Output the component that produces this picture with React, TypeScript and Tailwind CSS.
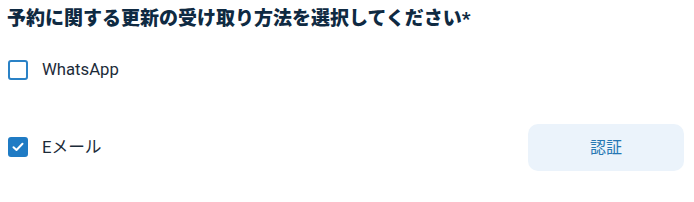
import React, { useState } from "react";

function Check({ checked, onClick }: { checked: boolean; onClick: () => void }) {
  return (
    <button
      onClick={onClick}
      className={
        "w-5 h-5 rounded-[3px] border-2 flex items-center justify-center shrink-0 " +
        (checked ? "bg-[#1f7bc4] border-[#1f7bc4]" : "bg-white border-[#2a82c6]")
      }
    >
      {checked && (
        <svg width="12" height="10" viewBox="0 0 12 10" fill="none">
          <path d="M1.5 5.2 L4.5 8 L10.5 1.8" stroke="white" strokeWidth="2" strokeLinecap="round" strokeLinejoin="round" />
        </svg>
      )}
    </button>
  );
}

export default function App() {
  const [wa, setWa] = useState(false);
  const [em, setEm] = useState(true);
  return (
    <div
      className="w-[694px] h-[202px] bg-white px-2 pt-[5px]"
      style={{ fontFamily: 'Roboto, "Noto Sans CJK JP", sans-serif' }}
    >
      <h1 className="text-[19px] leading-[28px] font-extrabold text-[#0f2a42] -ml-[1px]">
        予約に関する更新の受け取り方法を選択してください*
      </h1>
      <div className="mt-[27px] flex items-center h-5 gap-[14px]">
        <Check checked={wa} onClick={() => setWa(!wa)} />
        <span className="text-[16.7px] text-[#1c2b39]">WhatsApp</span>
      </div>
      <div className="mt-[44px] flex items-center justify-between pr-[2px]">
        <div className="flex items-center gap-[14px]">
          <Check checked={em} onClick={() => setEm(!em)} />
          <span className="text-[16.7px] text-[#1c2b39]">Eメール</span>
        </div>
        <button className="w-[156px] h-[47px] rounded-[10px] bg-[#ebf3fb] text-[#2677b3] text-[16px]">
          認証
        </button>
      </div>
    </div>
  );
}
